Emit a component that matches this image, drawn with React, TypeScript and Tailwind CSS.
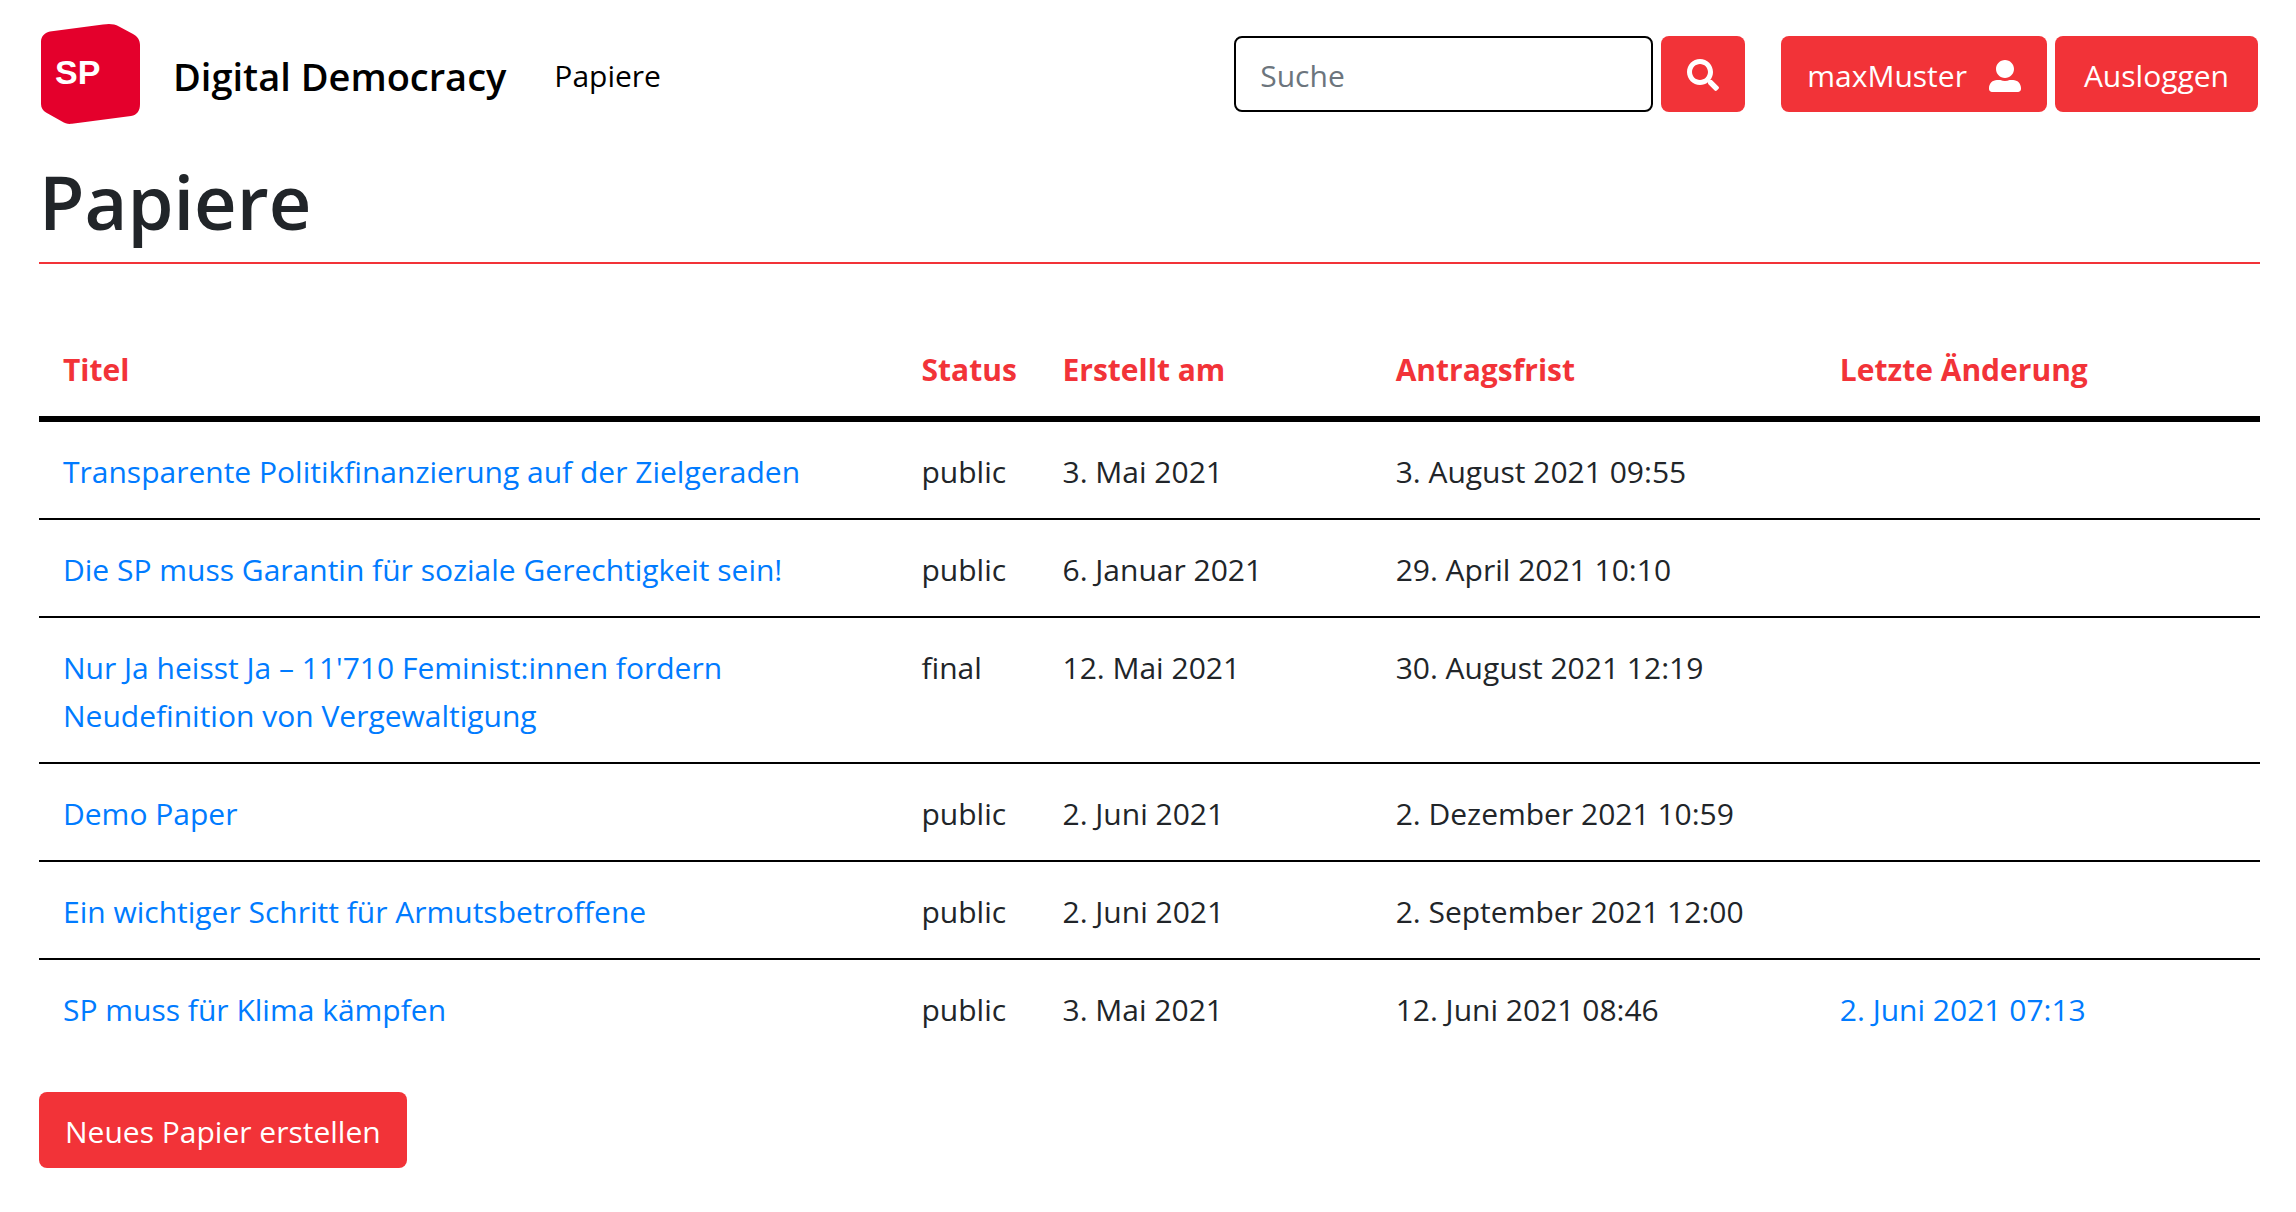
import { FaSearch, FaUserAlt } from 'react-icons/fa';

type Paper = {
  title: string;
  status: string;
  created: string;
  deadline: string;
  changed?: string;
};

const papers: Paper[] = [
  { title: 'Transparente Politikfinanzierung auf der Zielgeraden', status: 'public', created: '3. Mai 2021', deadline: '3. August 2021 09:55' },
  { title: 'Die SP muss Garantin für soziale Gerechtigkeit sein!', status: 'public', created: '6. Januar 2021', deadline: '29. April 2021 10:10' },
  { title: "Nur Ja heisst Ja – 11'710 Feminist:innen fordern Neudefinition von Vergewaltigung", status: 'final', created: '12. Mai 2021', deadline: '30. August 2021 12:19' },
  { title: 'Demo Paper', status: 'public', created: '2. Juni 2021', deadline: '2. Dezember 2021 10:59' },
  { title: 'Ein wichtiger Schritt für Armutsbetroffene', status: 'public', created: '2. Juni 2021', deadline: '2. September 2021 12:00' },
  { title: 'SP muss für Klima kämpfen', status: 'public', created: '3. Mai 2021', deadline: '12. Juni 2021 08:46', changed: '2. Juni 2021 07:13' },
];

const cell = 'px-6 pt-[26px] pb-[22px]';

function Logo() {
  return (
    <svg viewBox="0 0 99 100" className="h-[100px] w-[99px] shrink-0" role="img" aria-label="SP">
      <path
        fill="#e4002c"
        d="M0 18 C0 12 4 8.500 9 7.500 L62 0.500 C68 -0.300 73 -0.300 78 2.500 L92 10 C96.500 12.500 99 16 99 21 V80 C99 87 96 91 90 92 L31 99.800 C27 100.300 24 99.500 21 97.500 L5 88.500 C2 86.500 0 84 0 80 Z"
      />
      <text x="14" y="60" fill="#ffffff" className="font-['Liberation_Sans',sans-serif] text-[34px] font-bold">
        SP
      </text>
    </svg>
  );
}

export default function App() {
  return (
    <div className="min-h-screen bg-white pt-6 pr-9 pb-10 pl-[39px] font-['Open_Sans',sans-serif] text-[30px] leading-[48px] text-[#212529]">
      <header className="flex items-center px-[2px]">
        <a href="#" className="flex items-center gap-[33px] text-[38px] font-semibold text-black">
          <Logo />
          <span className="pt-[3px]">Digital Democracy</span>
        </a>
        <nav className="ml-12 pt-[3px]">
          <a href="#" className="text-black">Papiere</a>
        </nav>
        <form className="ml-auto flex gap-2" onSubmit={(e) => e.preventDefault()}>
          <input
            type="search"
            aria-label="Suche"
            placeholder="Suche"
            className="h-[76px] w-[419px] rounded-lg border-2 border-black px-6 pt-[3px] placeholder:text-[#6c757d]"
          />
          <button
            type="submit"
            aria-label="Suchen"
            className="flex h-[76px] w-[84px] items-center justify-center rounded-lg bg-[#f23338] pt-[2px] text-white"
          >
            <FaSearch className="size-8" />
          </button>
        </form>
        <div className="ml-9 flex gap-2">
          <button type="button" className="flex h-[76px] items-center gap-[22px] rounded-lg bg-[#f23338] px-[26px] pt-[3px] text-white">
            maxMuster
            <FaUserAlt className="size-8" />
          </button>
          <button type="button" className="h-[76px] rounded-lg bg-[#f23338] px-[29px] pt-[3px] text-white">
            Ausloggen
          </button>
        </div>
      </header>

      <main>
        <h1 className="mt-[30px] border-b-2 border-[#f23338] pb-3 text-[74px] leading-[96px] font-semibold">Papiere</h1>
        <table className="mt-14 w-full table-fixed border-collapse text-left">
          <colgroup>
            <col />
            <col className="w-[141px]" />
            <col className="w-[15%]" />
            <col className="w-1/5" />
            <col className="w-1/5" />
          </colgroup>
          <thead>
            <tr className="border-b-[6px] border-black whitespace-nowrap text-[#f23338]">
              <th scope="col" className={cell}>Titel</th>
              <th scope="col" className={cell}>Status</th>
              <th scope="col" className={cell}>Erstellt am</th>
              <th scope="col" className={cell}>Antragsfrist</th>
              <th scope="col" className={cell}>Letzte Änderung</th>
            </tr>
          </thead>
          <tbody className="divide-y-2 divide-black">
            {papers.map((paper) => (
              <tr key={paper.title} className="align-top">
                <td className={cell}>
                  <a href="#" className="text-[#007bff]">{paper.title}</a>
                </td>
                <td className={cell}>{paper.status}</td>
                <td className={cell}>{paper.created}</td>
                <td className={cell}>{paper.deadline}</td>
                <td className={cell}>
                  {paper.changed && <a href="#" className="text-[#007bff]">{paper.changed}</a>}
                </td>
              </tr>
            ))}
          </tbody>
        </table>
        <button type="button" className="mt-9 h-[76px] rounded-lg bg-[#f23338] px-[26px] pt-[3px] text-white">
          Neues Papier erstellen
        </button>
      </main>
    </div>
  );
}
